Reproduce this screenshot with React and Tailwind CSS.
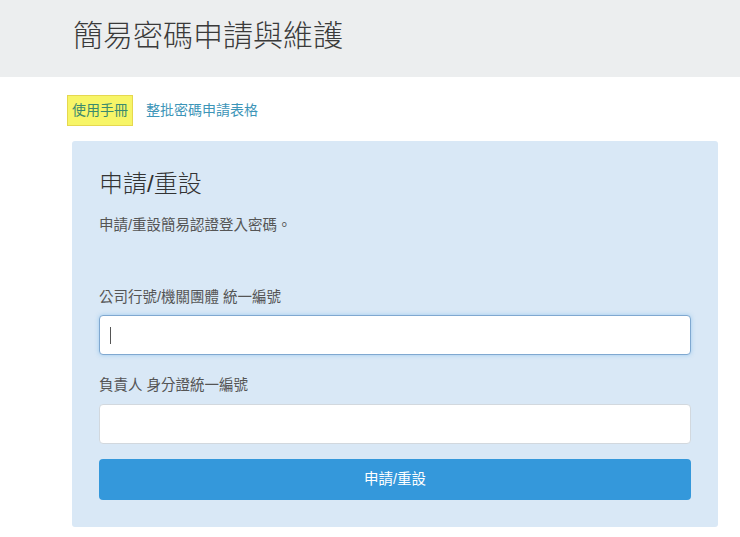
import React from 'react';

const App = () => {
  return (
    <div className="min-h-[537px] w-[740px] bg-white font-['Liberation_Sans','Noto_Sans_CJK_TC',sans-serif]">
      {/* Header band */}
      <div className="h-[77px] bg-[#eceeef] pl-[73px] pt-[14px]">
        <h1 className="text-[30px] leading-[44px] font-extralight text-[#3a3a3a]">簡易密碼申請與維護</h1>
      </div>

      {/* Links */}
      <div className="flex items-center gap-[13px] pl-[67px] pt-[18px]">
        <a className="border border-[#e6d84f] bg-[#f7f567] px-[4px] py-[5px] text-[14px] leading-[19px] text-[#3b8a6e]">使用手冊</a>
        <a className="text-[14px] leading-[19px] text-[#3d95b8]">整批密碼申請表格</a>
      </div>

      {/* Panel */}
      <div className="ml-[72px] mt-[15px] w-[646px] rounded-[3px] bg-[#d9e8f6] px-[27px] pt-[28px] pb-[27px]">
        <h2 className="text-[24px] leading-[30px] font-light text-[#333]">申請/重設</h2>
        <p className="mt-[16px] text-[14.5px] leading-[20px] text-[#555]">申請/重設簡易認證登入密碼。</p>

        <label className="mt-[52px] block text-[14.5px] leading-[20px] text-[#555]">公司行號/機關團體 統一編號</label>
        <div className="relative mt-[8px]">
          <input
            autoFocus
            className="block h-[40px] w-full rounded-[4px] border border-[#7fa8d0] bg-white px-[10px] text-[14px] text-[#333] shadow-[0_0_4px_rgba(102,175,233,0.5)] outline-none"
          />
          {/* text caret as seen in the screenshot */}
          <span className="pointer-events-none absolute left-[11px] top-[12px] h-[17px] w-px bg-[#555]" />
        </div>

        <label className="mt-[20px] block text-[14.5px] leading-[20px] text-[#555]">負責人 身分證統一編號</label>
        <input className="mt-[9px] block h-[40px] w-full rounded-[4px] border border-[#d2d8de] bg-white px-[10px] text-[14px] text-[#333] outline-none" />

        <button className="mt-[15px] block h-[41px] w-full rounded-[4px] bg-[#3498db] text-[14.5px] text-white">申請/重設</button>
      </div>
    </div>
  );
};

export default App;
